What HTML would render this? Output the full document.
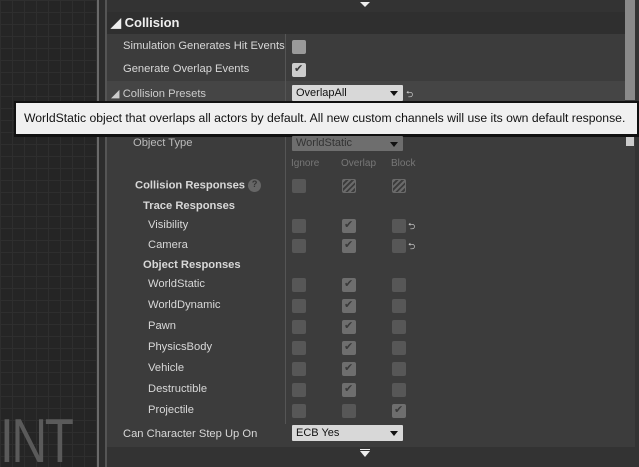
<!DOCTYPE html>
<html><head><meta charset="utf-8"><style>
*{margin:0;padding:0;box-sizing:border-box}
html{width:639px;height:467px;overflow:hidden}
body{width:639px;height:467px;overflow:hidden;background:#242424;font-family:"Liberation Sans",sans-serif;position:relative;color:#d8d8d8;font-size:11.2px}
.a{position:absolute}
.grid{left:0;top:0;width:97px;height:467px;background-color:#252525;background-image:linear-gradient(#2e2e2e 1px,transparent 1px),linear-gradient(90deg,#2e2e2e 1px,transparent 1px);background-size:12px 12px}
.lbl{position:absolute;white-space:nowrap}
.cb{position:absolute;width:14px;height:14px;background:#575757;border-radius:2px}
.ck::after{content:"✔";position:absolute;left:2px;top:-1px;font-size:11px;color:#3a3a3a}
.hat{background:repeating-linear-gradient(135deg,#6a6a6a 0 2px,#3c3c3c 2px 4px);border:1px solid #6a6a6a}
.dd{position:absolute;background:#d8d8d8;color:#111;border-radius:1px;font-size:11px;padding:2px 4px;height:16px}
.dd::after{content:"";position:absolute;right:5px;top:6px;border:4px solid transparent;border-top:5px solid #111}
.rs{position:absolute;font-size:9px;color:#ccc}
</style></head><body>
<div class="a grid"></div>
<div class="a" style="left:97px;top:0;width:2px;height:467px;background:#6a6a6a"></div>
<div class="a" style="left:99px;top:0;width:6px;height:467px;background:#2d2d2d"></div>
<div class="a" style="left:105px;top:0;width:2px;height:467px;background:#555"></div>
<div class="a" style="left:107px;top:0;width:532px;height:467px;background:#3c3c3c"></div>
<div class="a" style="left:107px;top:0;width:532px;height:12px;background:#333"></div>
<div class="a" style="left:360px;top:2px;border:5px solid transparent;border-top:5px solid #eee"></div>
<div class="a" style="left:107px;top:12px;width:518px;height:22px;background:#2f2f2f"></div>
<div class="lbl" style="left:111px;top:15px;font-size:13px;font-weight:bold;color:#eee">◢ Collision</div>
<div class="a" style="left:107px;top:81px;width:518px;height:22px;background:#454545"></div>
<div class="a" style="left:285px;top:34px;width:1px;height:390px;background:#555"></div>
<div class="a" style="left:625px;top:0;width:10px;height:100px;background:#8a8a8a"></div>
<div class="a" style="left:626px;top:136px;width:8px;height:10px;background:#ccc"></div>
<div class="a" style="left:635px;top:0;width:4px;height:467px;background:#333"></div>

<div class="lbl" style="left:123px;top:40px">Simulation Generates Hit Events</div>
<div class="cb" style="left:292px;top:40px;background:#9a9a9a"></div>
<div class="lbl" style="left:123px;top:63px">Generate Overlap Events</div>
<div class="cb ck" style="left:292px;top:63px;background:#ccc"></div>
<div class="lbl" style="left:111px;top:87px;color:#ccc">◢ Collision Presets</div>
<div class="dd" style="left:292px;top:85px;width:111px">OverlapAll</div>
<div class="rs" style="left:406px;top:87px">⮌</div>

<div class="a" style="left:14px;top:101px;width:625px;height:36px;background:#111"></div>
<div class="a" style="left:16px;top:103px;width:621px;height:31px;background:#f0f0f0"></div>
<div class="lbl" style="left:24px;top:111px;font-size:12.2px;color:#111">WorldStatic object that overlaps all actors by default. All new custom channels will use its own default response.</div>

<div class="lbl" style="left:133px;top:137px;color:#bbb">Object Type</div>
<div class="dd" style="left:292px;top:136px;width:111px;background:#6e6e6e;color:#333;height:15px;padding-top:1px">WorldStatic</div>
<div class="lbl" style="left:291px;top:158px;color:#777;font-size:10px">Ignore</div>
<div class="lbl" style="left:341px;top:158px;color:#777;font-size:10px">Overlap</div>
<div class="lbl" style="left:391px;top:158px;color:#777;font-size:10px">Block</div>
<div class="lbl" style="left:135px;top:179px;font-weight:bold">Collision Responses <span style="display:inline-block;width:13px;height:13px;border-radius:50%;background:#666;color:#333;font-size:9px;text-align:center;vertical-align:middle">?</span></div>
<div class="cb" style="left:292px;top:179px"></div>
<div class="cb hat" style="left:342px;top:179px"></div>
<div class="cb hat" style="left:392px;top:179px"></div>
<div class="lbl" style="left:143px;top:200px;font-weight:bold">Trace Responses</div>
<div class="lbl" style="left:143px;top:259px;font-weight:bold">Object Responses</div>

<div class="lbl" style="left:148px;top:219px">Visibility</div>
<div class="lbl" style="left:148px;top:239px">Camera</div>
<div class="lbl" style="left:148px;top:278px">WorldStatic</div>
<div class="lbl" style="left:148px;top:299px">WorldDynamic</div>
<div class="lbl" style="left:148px;top:320px">Pawn</div>
<div class="lbl" style="left:148px;top:341px">PhysicsBody</div>
<div class="lbl" style="left:148px;top:362px">Vehicle</div>
<div class="lbl" style="left:148px;top:383px">Destructible</div>
<div class="lbl" style="left:148px;top:404px">Projectile</div>

<div class="cb" style="left:292px;top:219px"></div><div class="cb ck" style="left:342px;top:219px;background:#6e6e6e"></div><div class="cb" style="left:392px;top:219px"></div><div class="rs" style="left:408px;top:219px">⮌</div>
<div class="cb" style="left:292px;top:239px"></div><div class="cb ck" style="left:342px;top:239px;background:#6e6e6e"></div><div class="cb" style="left:392px;top:239px"></div><div class="rs" style="left:408px;top:239px">⮌</div>
<div class="cb" style="left:292px;top:278px"></div><div class="cb ck" style="left:342px;top:278px;background:#6e6e6e"></div><div class="cb" style="left:392px;top:278px"></div>
<div class="cb" style="left:292px;top:299px"></div><div class="cb ck" style="left:342px;top:299px;background:#6e6e6e"></div><div class="cb" style="left:392px;top:299px"></div>
<div class="cb" style="left:292px;top:320px"></div><div class="cb ck" style="left:342px;top:320px;background:#6e6e6e"></div><div class="cb" style="left:392px;top:320px"></div>
<div class="cb" style="left:292px;top:341px"></div><div class="cb ck" style="left:342px;top:341px;background:#6e6e6e"></div><div class="cb" style="left:392px;top:341px"></div>
<div class="cb" style="left:292px;top:362px"></div><div class="cb ck" style="left:342px;top:362px;background:#6e6e6e"></div><div class="cb" style="left:392px;top:362px"></div>
<div class="cb" style="left:292px;top:383px"></div><div class="cb ck" style="left:342px;top:383px;background:#6e6e6e"></div><div class="cb" style="left:392px;top:383px"></div>
<div class="cb" style="left:292px;top:404px"></div><div class="cb" style="left:342px;top:404px"></div><div class="cb ck" style="left:392px;top:404px;background:#6e6e6e"></div>

<div class="lbl" style="left:123px;top:428px">Can Character Step Up On</div>
<div class="dd" style="left:292px;top:425px;width:111px">ECB Yes</div>

<div class="a" style="left:107px;top:447px;width:528px;height:20px;background:#333"></div>
<div class="a" style="left:360px;top:451px;border:5px solid transparent;border-top:6px solid #eee"></div>
<div class="a" style="left:360px;top:449px;width:10px;height:1px;background:#eee"></div>
<div class="lbl" style="left:0px;top:412px;height:55px;overflow:hidden;line-height:60px;font-size:62px;color:#5a5a5a;letter-spacing:-3px;transform:scaleX(0.8);transform-origin:left">INT</div>
</body></html>
